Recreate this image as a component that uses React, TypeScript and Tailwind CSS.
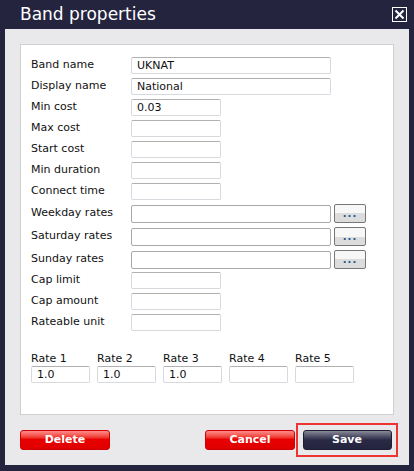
import React from "react";

const font = { fontFamily: '"DejaVu Sans", Verdana, sans-serif' };

function Field({ label, value = "", size = "short", dots = false }: { label: string; value?: string; size?: "short" | "long"; dots?: boolean }) {
  const width = size === "short" ? "w-[90px]" : "w-[200px]";
  const border = dots ? "border-[#a9a9a9]" : "border-[#d6d9de] border-t-[#b0b0b0]";
  return (
    <div className="flex items-center">
      <div className="w-[100px] text-[11px] text-[#111]">{label}</div>
      <div className={`${width} ${dots ? "h-[18px]" : "h-[17px]"} rounded-[2px] border bg-white ${border} px-[5px] text-[11px] leading-[15px] text-[#111]`}>
        {value}
      </div>
      {dots && (
        <div className="ml-[3px] flex h-[19px] w-[32px] items-center justify-center rounded-[2px] border border-[#777] bg-gradient-to-b from-[#f7f7f7] from-50% to-[#dcdcdc] to-50%">
          <span className="text-[10px] font-bold leading-none tracking-[1px] text-[#1f5a8f]">...</span>
        </div>
      )}
    </div>
  );
}

export default function App() {
  return (
    <div className="h-[471px] w-[414px] bg-[#24243f]" style={font}>
      <div className="flex h-[29px] items-center justify-between pl-[20px] pr-[7px]">
        <h1 className="text-[17px] leading-none text-white">Band properties</h1>
        <div className="flex h-[15px] w-[15px] items-center justify-center border-[1.5px] border-white">
          <svg width="11" height="11" viewBox="0 0 11 11">
            <path d="M1.5 1.5 L9.5 9.5 M9.5 1.5 L1.5 9.5" stroke="white" strokeWidth="2" />
          </svg>
        </div>
      </div>
      <div className="mx-[5px] h-[436px] bg-[#e9e9eb] px-[15px] pt-[15px]">
        <div className="flex h-[371px] flex-col border border-[#cfcfcf] bg-white pl-[10px] pt-[12px]">
          <div className="flex flex-col gap-[4px]">
            <Field label="Band name" value="UKNAT" size="long" />
            <Field label="Display name" value="National" size="long" />
            <Field label="Min cost" value="0.03" />
            <Field label="Max cost" />
            <Field label="Start cost" />
            <Field label="Min duration" />
            <Field label="Connect time" />
          </div>
          <div className="mt-[4px] flex flex-col gap-[4px]">
            <Field label="Weekday rates" size="long" dots />
            <Field label="Saturday rates" size="long" dots />
            <Field label="Sunday rates" size="long" dots />
          </div>
          <div className="mt-[3px] flex flex-col gap-[4px]">
            <Field label="Cap limit" />
            <Field label="Cap amount" />
            <Field label="Rateable unit" />
          </div>
          <div className="mt-[21px] flex gap-[7px]">
            {["1.0", "1.0", "1.0", "", ""].map((v, i) => (
              <div key={i} className="flex w-[59px] flex-col">
                <div className="text-[11px] leading-[13px] text-[#111]">Rate {i + 1}</div>
                <div className="mt-[1px] h-[17px] w-[59px] rounded-[2px] border border-[#d6d9de] border-t-[#b0b0b0] bg-white px-[5px] text-[11px] leading-[15px] text-[#111]">
                  {v}
                </div>
              </div>
            ))}
          </div>
        </div>
        <div className="mt-[8px] flex items-center justify-between">
          <button className="h-[20px] w-[90px] rounded-[3px] border border-[#c00] bg-gradient-to-b from-[#ff8a8a] via-[#e80000] via-45% to-[#e00000] text-[11px] font-bold text-white">
            Delete
          </button>
          <div className="flex items-center">
            <button className="h-[20px] w-[90px] rounded-[3px] border border-[#c00] bg-gradient-to-b from-[#ff8a8a] via-[#e80000] via-45% to-[#e00000] text-[11px] font-bold text-white">
              Cancel
            </button>
            <div className="-mr-[4px] ml-[1px] flex h-[34px] w-[102px] items-center justify-center border-2 border-[#ee3333]">
              <button className="h-[20px] w-[89px] rounded-[3px] border border-[#1d1d33] bg-gradient-to-b from-[#8a8a99] via-[#2a2a46] via-50% to-[#24243f] text-[11px] font-bold text-white">
                Save
              </button>
            </div>
          </div>
        </div>
      </div>
    </div>
  );
}
